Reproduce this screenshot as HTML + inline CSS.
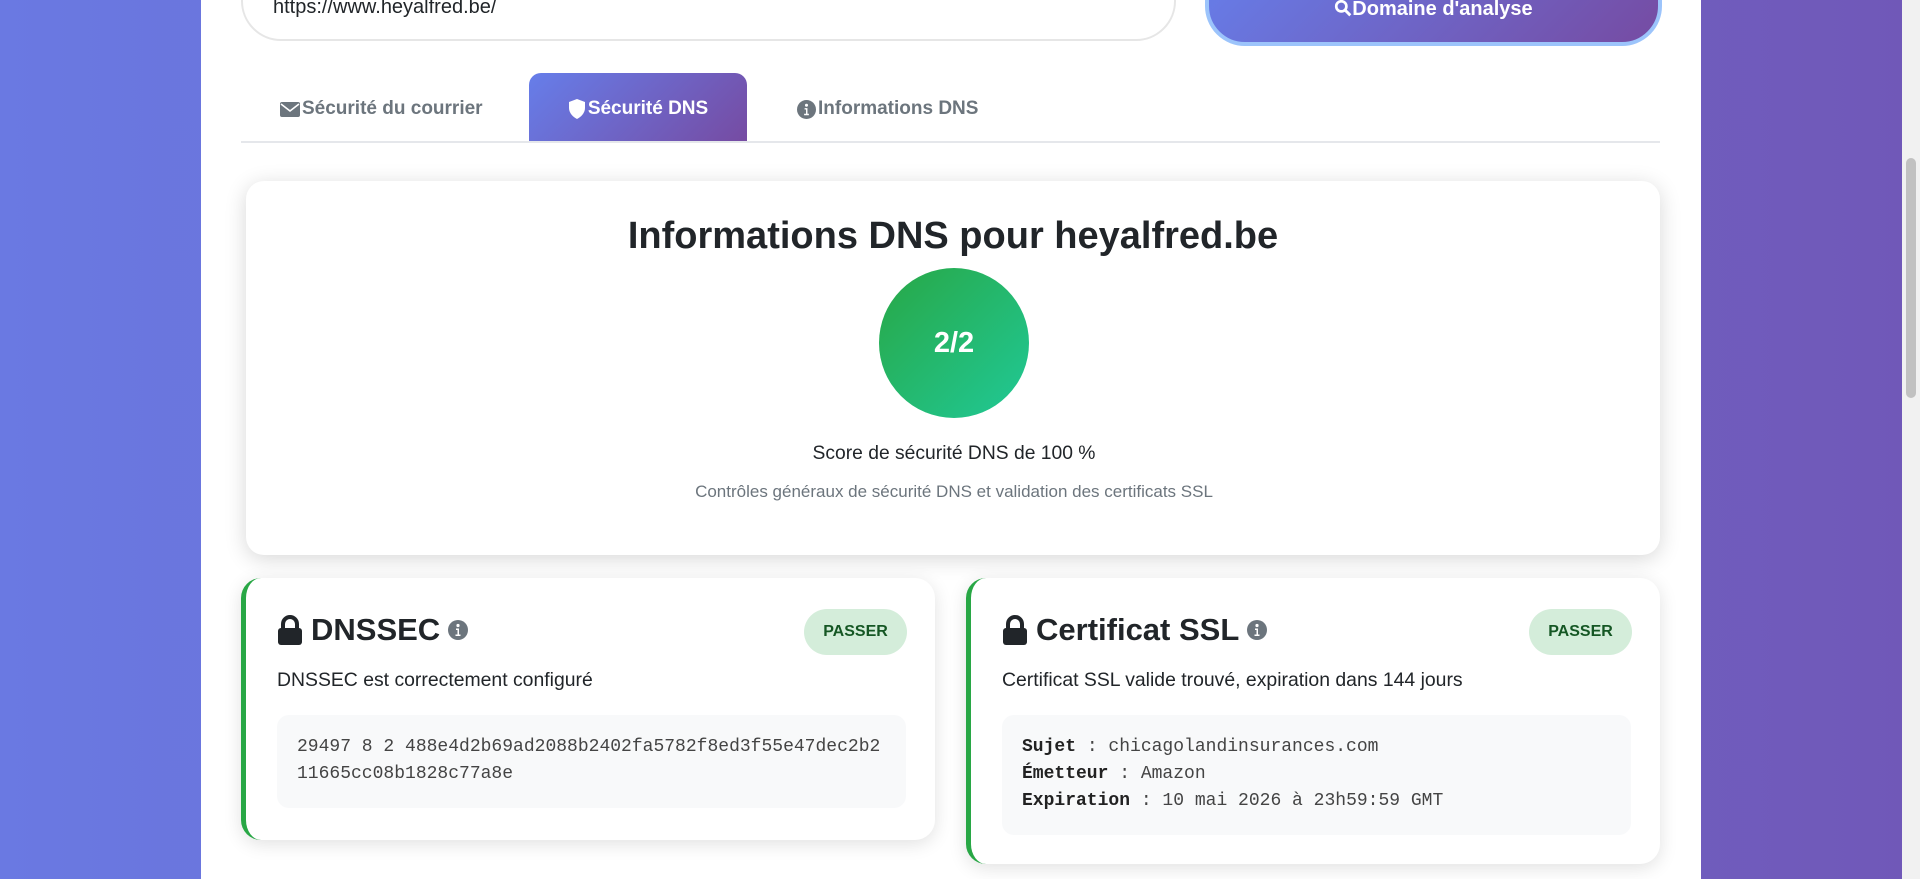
<!DOCTYPE html>
<html><head><meta charset="utf-8"><style>
*{box-sizing:border-box;margin:0;padding:0}
html,body{width:1920px;height:879px;overflow:hidden}
body{background:linear-gradient(90deg,#6a79e2,#7058b8);font-family:"Liberation Sans",sans-serif;color:#212529;position:relative}
.wrap{position:absolute;left:201px;top:0;width:1500px;height:879px;background:#fff}
.sb{position:absolute;left:1902px;top:0;width:18px;height:879px;background:#f1f1f1}
.sb div{position:absolute;left:4px;top:158px;width:10px;height:240px;background:#c1c1c1;border-radius:5px}
.abs{position:absolute}
.input{left:241px;top:-40px;width:935px;height:81px;border:2px solid #e6e6e6;border-radius:40px;background:#fff}
.input span{position:absolute;left:30px;top:34px;font-size:20px;color:#212529}
.btn{left:1205px;top:-40px;width:457px;height:86px;border-radius:40px;background:linear-gradient(135deg,#667eea,#764ba2);border:4px solid #9cc4fb;color:#fff;font-weight:bold;font-size:20px;text-align:center;padding-top:34px}
.tab{top:73px;height:69px;font-size:19px;font-weight:bold;color:#6c757d;display:flex;align-items:center;gap:2px;padding-top:3px}
.tab.active{left:529px;width:218px;background:linear-gradient(135deg,#667eea,#764ba2);color:#fff;border-radius:12px 12px 0 0;justify-content:center}
.line{left:241px;top:141px;width:1419px;height:2px;background:#e5e7eb}
.card0{left:246px;top:181px;width:1414px;height:374px;border-radius:18px;box-shadow:0 4px 22px rgba(0,0,0,.16);background:#fff}
.circ{left:879px;top:268px;width:150px;height:150px;border-radius:50%;background:linear-gradient(135deg,#28a745,#20c997);color:#fff;font-weight:bold;font-size:29px;display:flex;align-items:center;justify-content:center}
.t1{left:0;width:1908px;top:443px;font-size:19.3px;text-align:center}
.t2{left:0;width:1908px;top:482px;font-size:17px;color:#6c757d;text-align:center}
.card{top:578px;background:#fff;border-radius:20px;border-left:5px solid #28a745;box-shadow:0 4px 18px rgba(0,0,0,.12)}
.card h2{position:absolute;left:31px;top:34px;font-size:31px;font-weight:bold;display:flex;align-items:center;gap:8px}
.badge{position:absolute;top:31px;width:103px;height:46px;border-radius:23px;background:#d4edda;color:#155724;font-weight:bold;font-size:16px;display:flex;align-items:center;justify-content:center}
.desc{position:absolute;left:31px;top:91px;font-size:19.4px}
.code{position:absolute;left:31px;top:137px;width:629px;background:#f8f9fa;border-radius:12px;padding:19px 20px;font-family:"Liberation Mono",monospace;font-size:18px;line-height:27px;color:#444}
.code b{color:#222}
</style></head><body>
<div class="wrap"></div>
<div class="abs input"><span>https://www.heyalfred.be/</span></div>
<div class="abs btn"><svg width="18" height="18" viewBox="0 0 16 16" style="vertical-align:-2px"><circle cx="6.5" cy="6.5" r="4.5" fill="none" stroke="#fff" stroke-width="2.4"/><path d="M10 10l4.5 4.5" stroke="#fff" stroke-width="2.6"/></svg>Domaine d'analyse</div>
<div class="abs tab" style="left:280px"><svg width="20" height="15" viewBox="0 0 20 15"><rect width="20" height="15" rx="2" fill="#6c757d"/><path d="M1 2l9 7 9-7" fill="none" stroke="#fff" stroke-width="1.6"/></svg>Sécurité du courrier</div>
<div class="abs tab active"><svg width="18" height="20" viewBox="0 0 18 20"><path d="M9 0L1 3v6c0 5 4 9 8 11 4-2 8-6 8-11V3z" fill="#fff"/></svg>Sécurité DNS</div>
<div class="abs tab" style="left:797px"><svg width="19" height="19" viewBox="0 0 20 20"><circle cx="10" cy="10" r="10" fill="#6c757d"/><circle cx="10" cy="5.5" r="1.6" fill="#fff"/><path d="M8 8.5h3v6h1.5v1.5h-5v-1.5H9.5v-4.5H8z" fill="#fff"/></svg>Informations DNS</div>
<div class="abs line"></div>
<div class="abs card0"></div>
<div class="abs" style="left:246px;width:1414px;top:215px;font-size:38px;font-weight:bold;text-align:center;color:#212529">Informations DNS pour heyalfred.be</div>
<div class="abs circ">2/2</div>
<div class="abs t1">Score de sécurité DNS de 100 %</div>
<div class="abs t2">Contrôles généraux de sécurité DNS et validation des certificats SSL</div>

<div class="abs card" style="left:241px;width:694px;height:262px">
<h2><svg width="26" height="30" viewBox="0 0 26 30"><path d="M6 13V9a7 7 0 0 1 14 0v4" fill="none" stroke="#212529" stroke-width="4"/><rect x="1" y="13" width="24" height="17" rx="3" fill="#212529"/></svg>DNSSEC <svg width="20" height="20" viewBox="0 0 20 20"><circle cx="10" cy="10" r="10" fill="#6c757d"/><circle cx="10" cy="5.5" r="1.6" fill="#fff"/><path d="M8 8.5h3v6h1.5v1.5h-5v-1.5H9.5v-4.5H8z" fill="#fff"/></svg></h2>
<div class="badge" style="left:558px">PASSER</div>
<div class="desc">DNSSEC est correctement configuré</div>
<div class="code" style="height:93px">29497 8 2 488e4d2b69ad2088b2402fa5782f8ed3f55e47dec2b2 11665cc08b1828c77a8e</div>
</div>

<div class="abs card" style="left:966px;width:694px;height:286px">
<h2><svg width="26" height="30" viewBox="0 0 26 30"><path d="M6 13V9a7 7 0 0 1 14 0v4" fill="none" stroke="#212529" stroke-width="4"/><rect x="1" y="13" width="24" height="17" rx="3" fill="#212529"/></svg>Certificat SSL <svg width="20" height="20" viewBox="0 0 20 20"><circle cx="10" cy="10" r="10" fill="#6c757d"/><circle cx="10" cy="5.5" r="1.6" fill="#fff"/><path d="M8 8.5h3v6h1.5v1.5h-5v-1.5H9.5v-4.5H8z" fill="#fff"/></svg></h2>
<div class="badge" style="left:558px">PASSER</div>
<div class="desc">Certificat SSL valide trouvé, expiration dans 144 jours</div>
<div class="code" style="height:120px"><b>Sujet</b> : chicagolandinsurances.com<br><b>Émetteur</b> : Amazon<br><b>Expiration</b> : 10 mai 2026 à 23h59:59 GMT</div>
</div>
<div class="sb"><div></div></div>
</body></html>
